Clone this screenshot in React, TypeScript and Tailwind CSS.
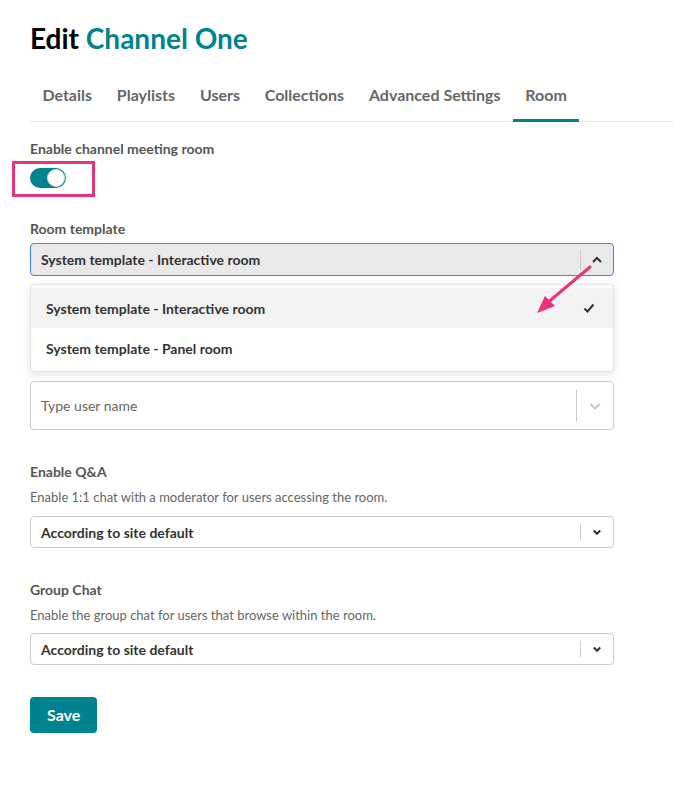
import React from "react";

const font = { fontFamily: "Lato, 'Open Sans', Arial, sans-serif" };

export default function App() {
  const tabs = ["Details", "Playlists", "Users", "Collections", "Advanced Settings", "Room"];
  return (
    <div className="min-h-screen bg-white text-[#333]" style={font}>
      <div className="relative pl-[30px] pt-[20px]">
        <h1 className="text-[28px] leading-[36px] font-bold text-black">
          Edit <span className="text-[#00838f]">Channel One</span>
        </h1>

        <div className="mt-[17px] flex border-b border-[#e6e6e6]">
          {tabs.map((t) => (
            <div
              key={t}
              className={`px-[12.4px] pt-[10px] pb-[12px] text-[16px] leading-[24px] font-bold text-[#666] border-b-[3px] -mb-px ${
                t === "Room" ? "border-[#00838f]" : "border-transparent"
              }`}
            >
              {t}
            </div>
          ))}
        </div>

        <div className="w-[584px]">
          <Label className="mt-[17px]">Enable channel meeting room</Label>

          <div className="relative mt-[9px] h-[20px]">
            <div className="absolute left-[-18px] top-[-7px] w-[83px] h-[36px] border-[3px] border-[#e8337d]" />
            <div className="relative w-[36px] h-[20px] rounded-full bg-[#00838f]">
              <div className="absolute right-[1px] top-[1px] w-[18px] h-[18px] rounded-full bg-white border border-[#d9d9d9]" />
            </div>
          </div>

          <Label className="mt-[31px]">Room template</Label>
          <div className="relative mt-[4px]">
            <div className="flex items-center h-[33px] rounded border border-[#3b82f6] bg-[#e9e9e9] pl-[10px]">
              <span className="flex-1 text-[14px] font-bold text-[#333]">System template - Interactive room</span>
              <div className="w-px h-[20px] bg-[#c8c8c8]" />
              <div className="w-[32px] flex justify-center">
                <Chevron up color="#333" />
              </div>
            </div>

            <div className="absolute left-0 right-0 top-[41px] z-10 rounded border border-[#e3e3e3] bg-white py-[3px] shadow-[0_2px_8px_rgba(0,0,0,0.12)]">
              <div className="flex items-center h-[40px] bg-[#f3f3f3] pl-[15px] pr-[18px]">
                <span className="flex-1 text-[14px] font-bold text-[#333]">System template - Interactive room</span>
                <svg width="12" height="10" viewBox="0 0 12 10">
                  <path d="M1.5 5.5 L4.5 8.5 L10.5 1.5" fill="none" stroke="#333" strokeWidth="2" />
                </svg>
              </div>
              <div className="flex items-center h-[40px] pl-[15px]">
                <span className="text-[14px] font-bold text-[#333]">System template - Panel room</span>
              </div>
            </div>

            <svg className="absolute z-20 left-[470px] top-[20px]" width="100" height="80" viewBox="0 0 100 80">
              <line x1="90" y1="4" x2="46" y2="41" stroke="#e8337d" strokeWidth="3" strokeLinecap="round" />
              <polygon points="37,50 45,33 55,43" fill="#e8337d" />
            </svg>
          </div>

          <div className="mt-[105px] flex items-center h-[49px] rounded border border-[#cccccc] bg-white pl-[10px]">
            <span className="flex-1 text-[14px] text-[#666]">Type user name</span>
            <div className="w-px h-[32px] bg-[#cccccc]" />
            <div className="w-[36px] flex justify-center">
              <Chevron color="#c4c4c4" />
            </div>
          </div>

          <Label className="mt-[32px]">Enable Q&amp;A</Label>
          <p className="mt-[6px] text-[13px] leading-[18px] text-[#666]">
            Enable 1:1 chat with a moderator for users accessing the room.
          </p>
          <Select className="mt-[10px]" />

          <Label className="mt-[32px]">Group Chat</Label>
          <p className="mt-[6px] text-[13px] leading-[18px] text-[#666]">
            Enable the group chat for users that browse within the room.
          </p>
          <Select className="mt-[9px]" />

          <button className="mt-[32px] h-[36px] px-[17px] rounded bg-[#00838f] text-white text-[16px] font-bold">
            Save
          </button>
        </div>
      </div>
    </div>
  );
}

function Label({ children, className = "" }: { children: React.ReactNode; className?: string }) {
  return <div className={`text-[14px] leading-[20px] font-bold text-[#555] ${className}`}>{children}</div>;
}

function Select({ className = "" }: { className?: string }) {
  return (
    <div className={`flex items-center h-[32px] rounded border border-[#cccccc] bg-white pl-[10px] ${className}`}>
      <span className="flex-1 text-[14px] font-bold text-[#333]">According to site default</span>
      <div className="w-px h-[16px] bg-[#cccccc]" />
      <div className="w-[32px] flex justify-center">
        <Chevron color="#333" small />
      </div>
    </div>
  );
}

function Chevron({ up = false, color, small = false }: { up?: boolean; color: string; small?: boolean }) {
  const w = small ? 10 : 14;
  return (
    <svg width={w} height={w} viewBox="0 0 14 14">
      <path
        d={up ? "M3 9 L7 5 L11 9" : "M2.5 5 L7 9.5 L11.5 5"}
        fill="none"
        stroke={color}
        strokeWidth={small ? 3 : 2}
      />
    </svg>
  );
}
